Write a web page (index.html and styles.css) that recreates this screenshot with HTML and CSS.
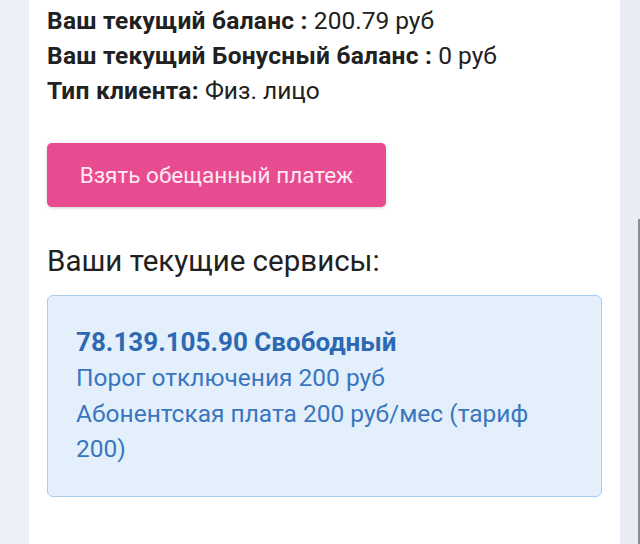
FILE: index.html
```html
<!DOCTYPE html>
<html lang="ru">
<head>
<meta charset="utf-8">
<link rel="stylesheet" href="styles.css">
</head>
<body>
<div class="page">
  <main class="card">
    <div class="info">
      <div class="row"><b>Ваш текущий баланс :</b> 200.79 руб</div>
      <div class="row"><b>Ваш текущий Бонусный баланс :</b> 0 руб</div>
      <div class="row"><b>Тип клиента:</b> Физ. лицо</div>
    </div>
    <button class="promise">Взять обещанный платеж</button>
    <h2 class="title">Ваши текущие сервисы:</h2>
    <div class="service">
      <div class="svc-name">78.139.105.90 Свободный</div>
      <div class="svc-line">Порог отключения 200 руб</div>
      <div class="svc-line">Абонентская плата 200 руб/мес (тариф 200)</div>
    </div>
  </main>
  <aside class="edge"><div class="edge-line"></div></aside>
</div>
</body>
</html>
```
FILE: styles.css
```css
html, body {
  margin: 0;
  padding: 0;
  height: 100%;
}
body {
  background: #edf0f6;
  font-family: Roboto, "Noto Sans", sans-serif;
  color: #212121;
  overflow: hidden;
}
.page {
  display: flex;
  height: 544px;
  padding-left: 29px;
}
.card {
  width: 591px;
  background: #ffffff;
  padding: 3px 0 0 18px;
  box-sizing: border-box;
}
.info {
  font-size: 24.5px;
  line-height: 35px;
  white-space: nowrap;
}
.row b {
  font-weight: 700;
  letter-spacing: 0.25px;
}
.promise {
  display: block;
  margin-top: 35px;
  width: 339px;
  height: 64px;
  border: none;
  border-radius: 5px;
  background: #e84b8f;
  color: #fde9f2;
  font-family: Roboto, "Noto Sans", sans-serif;
  font-size: 22.5px;
  box-shadow: 0 1px 3px rgba(0,0,0,0.18);
  padding: 0;
}
.title {
  margin: 36px 0 0 0;
  font-size: 29.5px;
  font-weight: 400;
  line-height: 36px;
  color: #212121;
}
.service {
  margin-top: 16px;
  width: 555px;
  box-sizing: border-box;
  height: 202px;
  background: #e3f0fc;
  border: 1.5px solid #a7cdf0;
  border-radius: 6px;
  padding: 28px 40px 0 28px;
  color: #3a76c0;
  font-size: 24.5px;
  line-height: 35.5px;
}
.svc-name {
  font-weight: 700;
  font-size: 26px;
  line-height: 36px;
  color: #2d69b2;
}
.edge {
  flex: 1;
  display: flex;
  justify-content: flex-end;
  padding-top: 219px;
  background: #e9ecf4;
}
.edge-line {
  width: 2px;
  background: #8a8d94;
}
```
